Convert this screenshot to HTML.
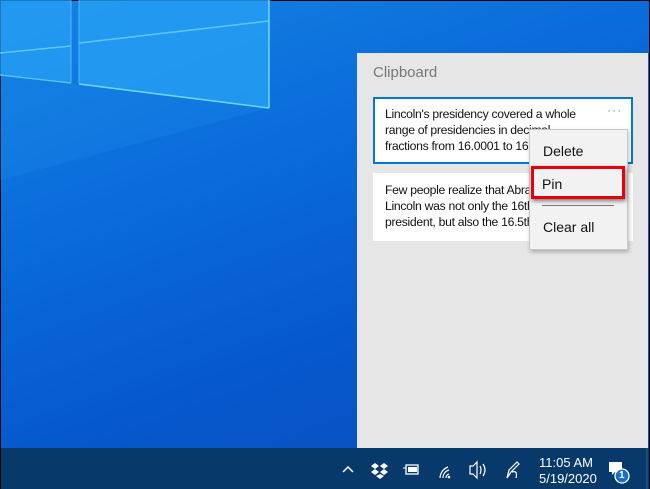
<!DOCTYPE html>
<html><head><style>
*{margin:0;padding:0;box-sizing:border-box}
body{width:650px;height:489px;overflow:hidden;position:relative;background:#000;font-family:"Liberation Sans",sans-serif}
#desk{position:absolute;left:1px;top:1px;width:648px;height:447px;background:linear-gradient(160deg,#1683e2 0%,#0a6cdb 35%,#0657cb 70%,#0a4fbf 100%)}
#panel{position:absolute;left:357px;top:53px;width:291px;height:395px;background:#e6e6e6}
.t{position:absolute;font-size:12.2px;color:#111;line-height:16px;white-space:nowrap}
.card{position:absolute;background:#fff}
#menu{position:absolute;left:529px;top:129px;width:99px;height:121px;background:#f2f2f2;border:1px solid #c8c8c8;box-shadow:1px 2px 4px rgba(0,0,0,.25)}
#tb{position:absolute;left:1px;top:448px;width:648px;height:41px;background:#08396b}
.w{color:#fff;position:absolute;font-size:13px}
.m{font-size:14px}
</style></head><body>
<div id="desk">
<svg width="648" height="447" style="position:absolute;left:-1px;top:-1px">
<polygon points="0,0 71,0 71,83 0,75" fill="#27a0f4" opacity=".75"/>
<polygon points="79,0 269,0 269,108 79,84" fill="#27a0f4" opacity=".8"/>
<polygon points="0,75 269,108 0,180" fill="#1a8aea" opacity=".25"/>
<line x1="0" y1="53" x2="71" y2="46" stroke="#5cc6ff" stroke-width="1.5"/>
<line x1="79" y1="43" x2="269" y2="21" stroke="#5cc6ff" stroke-width="1.5"/>
<line x1="0" y1="75" x2="71" y2="83" stroke="#5cc6ff" stroke-width="1.2"/>
<line x1="79" y1="84" x2="269" y2="108" stroke="#6ad8ff" stroke-width="1.5"/>
<line x1="269" y1="0" x2="269" y2="108" stroke="#6ad8ff" stroke-width="1.5"/>
<line x1="71" y1="0" x2="71" y2="83" stroke="#4cb8ff" stroke-width="1"/>
<line x1="79" y1="0" x2="79" y2="84" stroke="#4cb8ff" stroke-width="1"/>
</svg>
</div>
<div id="panel"></div>
<div class="t" style="left:373px;top:65px;font-size:15px;color:#777">Clipboard</div>
<div class="card" style="left:373px;top:97px;width:260px;height:67px;border:2px solid #0078d7"></div>
<div class="t" style="left:385px;top:106px;letter-spacing:-0.3px">Lincoln's presidency covered a whole<br>range of presidencies in decimal<br>fractions from 16.0001 to 16.9999</div>
<div class="t" style="left:607px;top:102px;color:#888;letter-spacing:1px">···</div>
<div class="card" style="left:373px;top:173px;width:260px;height:68px"></div>
<div class="t" style="left:385px;top:182px;letter-spacing:-0.3px">Few people realize that Abraham<br>Lincoln was not only the 16th<br>president, but also the 16.5th</div>
<div id="menu"></div>
<div class="t m" style="left:543px;top:143px">Delete</div>
<div style="position:absolute;left:531px;top:166px;width:94px;height:33px;border:3px solid #e8000b;box-shadow:1px 2px 4px rgba(0,0,0,.5)"></div>
<div class="t m" style="left:542px;top:176px">Pin</div>
<div style="position:absolute;left:542px;top:205px;width:72px;height:1px;background:#777"></div>
<div class="t m" style="left:543px;top:219px">Clear all</div>
<div id="tb"></div>
<svg width="650" height="41" style="position:absolute;left:0;top:448px" fill="none" stroke="#fff" stroke-width="1.5">
<polyline points="343,24 348,19 353,24"/>
<g fill="#fff" stroke="none"><path d="M375,15l4,3-4,3-4-3z M384,15l4,3-4,3-4-3z M375,21l4,3-4,3-4-3z M384,21l4,3-4,3-4-3z M376,28l4-2 4,2-4,3z"/></g>
<rect x="406" y="17" width="12" height="9" stroke-width="1.3"/><rect x="408" y="19" width="9" height="5" fill="#fff" stroke="none"/><line x1="403" y1="20" x2="406" y2="20" stroke-width="1"/>
<path d="M440,30a12,12 0 0 1 8,-11 M443,30a8,8 0 0 1 6,-8 M446,30a4,4 0 0 1 3,-4" stroke-width="1.2"/><circle cx="449" cy="29" r="1.3" fill="#fff" stroke="none"/>
<path d="M470,18h3l4,-4v16l-4,-4h-3z M480,18q2,4 0,8 M483,16q4,6 0,12" stroke-width="1.2"/>
<path d="M507,30l2,-8 8,-8 2,2-8,8z M512,24q6,-2 4,6" stroke-width="1.2"/>
<path d="M609,14h13v10h-7l-3,3v-3h-3z" fill="#fff" stroke="none"/>
<circle cx="622" cy="28" r="7" fill="#1b6fc0" stroke="#fff" stroke-width="1.3"/>
<line x1="647" y1="0" x2="647" y2="41" stroke="#335d8a" stroke-width="1"/>
</svg>
<div class="w" style="left:539px;top:455px">11:05 AM</div>
<div class="w" style="left:539px;top:471px">5/19/2020</div>
<div class="w" style="left:619px;top:470px;font-size:10px;font-weight:bold">1</div>
</body></html>
